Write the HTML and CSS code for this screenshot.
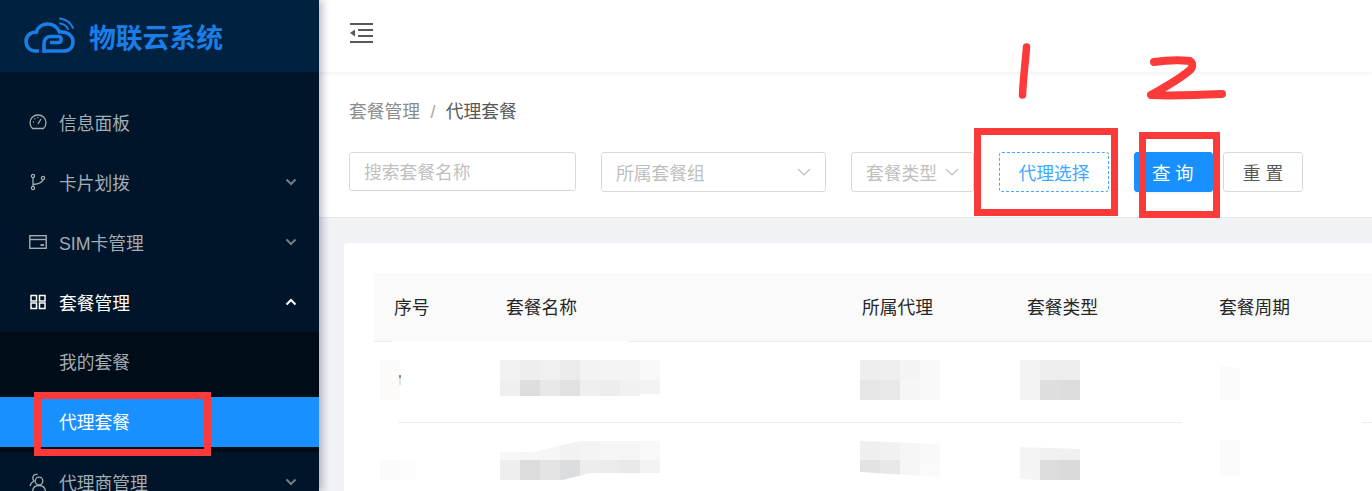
FILE: index.html
```html
<!DOCTYPE html>
<html lang="zh-CN">

<head>
    <meta charset="UTF-8">
    <meta name="viewport" content="width=device-width, initial-scale=1.0">
    <title>物联云系统 - 代理套餐</title>
    <link rel="stylesheet" href="styles.css">
</head>

<body>
    <div class="app">
        <aside class="sidebar">
            <div class="logo">
                <svg class="logo-mark" viewBox="20 14 60 42" fill="none" stroke="#1a7ee6" stroke-linecap="round">
                    <path stroke-width="3.600" stroke-linecap="butt" d="M39 51 H35.500 C29.500 51 26 46.500 26 41.500 C26 36 30.500 32 36.500 32 C38 26.500 43 24 47.500 24 C53 24 57.500 27.500 59.500 32 C67 31 73 35.500 73 42 C73 47.500 69 51 63.500 51 H43"/>
                    <path stroke-width="3.600" stroke-linecap="butt" d="M44 53 V44 C44 39 47 36.500 51 36.500 H58.500 C62 36.500 62 42.500 58.500 42.500 H50"/>
                    <path stroke-width="2" d="M60 18.500 C66 19.500 71 23 73 28"/>
                    <path stroke-width="2" d="M60 23.500 C63.500 24 66.500 26 68 29"/>
                </svg>
                <span class="logo-text">物联云系统</span>
            </div>
            <nav class="menu">
                <div class="menu-item">
                    <svg class="menu-icon" viewBox="0 0 18 18" fill="none" stroke="currentColor" stroke-width="1.300">
                        <path d="M3.500 15.500 H14.500 C16 14 17 12 17 9.500 C17 5.300 13.500 2 9 2 C4.500 2 1 5.300 1 9.500 C1 12 2 14 3.500 15.500 Z"/>
                        <path d="M9 11 L12 6 M4 9 H5 M5.500 5.500 L6.300 6.200 M9 4 V5"/>
                    </svg>
                    <span>信息面板</span>
                </div>
                <div class="menu-item">
                    <svg class="menu-icon" viewBox="0 0 18 18" fill="none" stroke="currentColor" stroke-width="1.300">
                        <circle cx="4" cy="3" r="1.600"/>
                        <circle cx="4" cy="15" r="1.600"/>
                        <circle cx="14" cy="5" r="1.600"/>
                        <path d="M4 4.600 V13.400 M4 11.500 C9 11 13.500 10 14 6.600"/>
                    </svg>
                    <span>卡片划拨</span>
                    <svg class="caret" viewBox="0 0 12 8" fill="none" stroke="currentColor" stroke-width="2"><path d="M1.500 1.500 L6 6 L10.500 1.500"/></svg>
                </div>
                <div class="menu-item">
                    <svg class="menu-icon" viewBox="0 0 18 18" fill="none" stroke="currentColor" stroke-width="1.400">
                        <rect x="0.800" y="2.700" width="16.400" height="12.600"/>
                        <path d="M1 6.500 H17"/>
                        <path d="M11.500 12 H15" stroke-width="1.800"/>
                    </svg>
                    <span>SIM卡管理</span>
                    <svg class="caret" viewBox="0 0 12 8" fill="none" stroke="currentColor" stroke-width="2"><path d="M1.500 1.500 L6 6 L10.500 1.500"/></svg>
                </div>
                <div class="menu-item is-open">
                    <svg class="menu-icon" viewBox="0 0 18 18" fill="none" stroke="currentColor" stroke-width="1.500">
                        <rect x="2" y="2.500" width="5.500" height="5.500"/>
                        <rect x="10.500" y="2.500" width="5.500" height="5.500"/>
                        <rect x="2" y="10" width="5.500" height="5.500"/>
                        <rect x="10.500" y="10" width="5.500" height="5.500"/>
                    </svg>
                    <span>套餐管理</span>
                    <svg class="caret" viewBox="0 0 12 8" fill="none" stroke="currentColor" stroke-width="2"><path d="M1.500 6.500 L6 2 L10.500 6.500"/></svg>
                </div>
                <div class="submenu">
                    <div class="submenu-item">我的套餐</div>
                    <div class="submenu-item is-active">代理套餐</div>
                </div>
                <div class="menu-item">
                    <svg class="menu-icon" viewBox="0 0 18 18" fill="none" stroke="currentColor" stroke-width="1.300">
                        <circle cx="10" cy="8" r="3.800"/>
                        <path d="M3.500 18 C4 14.500 6.500 12.500 10 12.500 C13.500 12.500 16 14.500 16.500 18"/>
                        <path d="M8.500 1.500 C6 0.800 3.800 2.500 3.800 5 C3.800 6.300 4.300 7.300 5 8 C3 9 1.500 10.800 1 13"/>
                    </svg>
                    <span>代理商管理</span>
                    <svg class="caret" viewBox="0 0 12 8" fill="none" stroke="currentColor" stroke-width="2"><path d="M1.500 1.500 L6 6 L10.500 1.500"/></svg>
                </div>
            </nav>
        </aside>

        <main class="main">
            <header class="topbar">
                <svg class="fold-icon" viewBox="0 0 23 20" fill="#595959">
                    <rect x="0" y="0" width="23" height="2"/>
                    <rect x="8" y="6" width="15" height="2"/>
                    <rect x="8" y="12" width="15" height="2"/>
                    <rect x="0" y="18" width="23" height="2"/>
                    <path d="M0 10 L5 6.500 V13.500 Z"/>
                </svg>
            </header>

            <section class="toolbar">
                <div class="breadcrumb">
                    <span class="crumb">套餐管理</span>
                    <span class="crumb-sep">/</span>
                    <span class="crumb-current">代理套餐</span>
                </div>
                <div class="filters">
                    <input class="field field-search" type="text" placeholder="搜索套餐名称">
                    <div class="field field-group">
                        <span>所属套餐组</span>
                        <svg class="select-arrow" viewBox="0 0 14 8" fill="none" stroke="currentColor" stroke-width="1.200"><path d="M1 1 L7 7 L13 1"/></svg>
                    </div>
                    <div class="field field-type">
                        <span>套餐类型</span>
                        <svg class="select-arrow" viewBox="0 0 14 8" fill="none" stroke="currentColor" stroke-width="1.200"><path d="M1 1 L7 7 L13 1"/></svg>
                    </div>
                    <button class="btn btn-dashed">代理选择</button>
                    <button class="btn btn-primary">查询</button>
                    <button class="btn btn-default">重置</button>
                </div>
            </section>

            <section class="content">
                <div class="card">
                    <div class="table">
                        <div class="table-head">
                            <div>序号</div>
                            <div>套餐名称</div>
                            <div>所属代理</div>
                            <div>套餐类型</div>
                            <div>套餐周期</div>
                        </div>

                        <!-- values are blurred out in the screenshot -->
                        <div class="table-row">
                            <div class="cell-no">
                                <svg class="blur blur-no" viewBox="0 0 24 40">
                                    <rect width="20" height="40" fill="#fcfbfa"/>
                                    <rect x="19" y="15" width="2" height="3" fill="#8f8f8f"/>
                                    <rect x="19" y="18" width="2" height="7" fill="#cfe6fb"/>
                                </svg>
                            </div>
                            <div class="cell-name">
                                <svg class="blur blur-name" viewBox="0 0 160 40">
                                    <rect x="0" width="20" height="20" fill="#f2f2f2"/>
                                    <rect x="20" width="20" height="20" fill="#eeeeee"/>
                                    <rect x="40" width="20" height="20" fill="#f0f0f0"/>
                                    <rect x="60" width="20" height="20" fill="#ebebeb"/>
                                    <rect x="80" width="20" height="20" fill="#f3f3f3"/>
                                    <rect x="100" width="20" height="20" fill="#f3f4f4"/>
                                    <rect x="120" width="20" height="20" fill="#f3f4f4"/>
                                    <rect x="140" width="20" height="20" fill="#f8f9f9"/>
                                    <rect x="0" y="20" width="20" height="16" fill="#efefef"/>
                                    <rect x="20" y="20" width="20" height="16" fill="#dedede"/>
                                    <rect x="40" y="20" width="20" height="16" fill="#e8e8e8"/>
                                    <rect x="60" y="20" width="20" height="16" fill="#e0e1e2"/>
                                    <rect x="80" y="20" width="20" height="16" fill="#efefef"/>
                                    <rect x="100" y="20" width="20" height="16" fill="#ededed"/>
                                    <rect x="120" y="20" width="20" height="16" fill="#f1f1f1"/>
                                    <rect x="140" y="20" width="20" height="14" fill="#f3f3f3"/>
                                </svg>
                            </div>
                            <div class="cell-agent">
                                <svg class="blur blur-agent" viewBox="0 0 80 40">
                                    <rect x="0" width="20" height="20" fill="#eeeeee"/>
                                    <rect x="20" width="20" height="20" fill="#efefef"/>
                                    <rect x="40" width="20" height="20" fill="#f4f4f4"/>
                                    <rect x="60" width="20" height="20" fill="#f9f9f9"/>
                                    <rect x="0" y="20" width="20" height="20" fill="#e6e6e6"/>
                                    <rect x="20" y="20" width="20" height="20" fill="#e9e9e9"/>
                                    <rect x="40" y="20" width="20" height="20" fill="#f6f6f6"/>
                                    <rect x="60" y="20" width="20" height="20" fill="#f9f9f9"/>
                                </svg>
                            </div>
                            <div class="cell-type">
                                <svg class="blur blur-type" viewBox="0 0 60 40">
                                    <rect x="0" width="20" height="40" fill="#f3f3f3"/>
                                    <rect x="20" width="20" height="20" fill="#eeeeee"/>
                                    <rect x="40" width="20" height="20" fill="#eeeeee"/>
                                    <rect x="20" y="20" width="20" height="20" fill="#dedede"/>
                                    <rect x="40" y="20" width="20" height="20" fill="#dddddd"/>
                                </svg>
                            </div>
                            <div class="cell-cycle">
                                <svg class="blur blur-cycle" viewBox="0 0 20 40">
                                    <path d="M0 6 L20 8 V40 H0 Z" fill="#fbfbfb"/>
                                </svg>
                            </div>
                        </div>

                        <div class="table-row">
                            <div class="cell-no">
                                <svg class="blur blur-no" viewBox="0 0 24 40">
                                    <rect y="20" width="20" height="20" fill="#fbfbfb"/>
                                </svg>
                                <svg class="blur blur-no-end" viewBox="0 0 16 40">
                                    <rect y="20" width="16" height="20" fill="#fcfdfc"/>
                                </svg>
                            </div>
                            <div class="cell-name">
                                <svg class="blur blur-name" viewBox="0 0 160 40">
                                    <g clip-path="polygon(0 12px, 33px 12px, 80px 1px, 160px 1px, 160px 33px, 90px 33px, 63px 40px, 0 40px)">
                                        <rect x="0" width="20" height="20" fill="#f7f7f7"/>
                                        <rect x="20" width="20" height="20" fill="#f6f6f6"/>
                                        <rect x="40" width="20" height="20" fill="#f6f6f6"/>
                                        <rect x="60" width="20" height="20" fill="#f2f2f2"/>
                                        <rect x="80" width="20" height="20" fill="#f4f4f4"/>
                                        <rect x="100" width="20" height="20" fill="#f4f5f5"/>
                                        <rect x="120" width="20" height="20" fill="#f4f5f5"/>
                                        <rect x="140" width="20" height="20" fill="#f9f9f9"/>
                                        <rect x="0" y="20" width="20" height="20" fill="#eeeeee"/>
                                        <rect x="20" y="20" width="20" height="20" fill="#dcdcdc"/>
                                        <rect x="40" y="20" width="20" height="20" fill="#e4e4e4"/>
                                        <rect x="60" y="20" width="20" height="20" fill="#dcddde"/>
                                        <rect x="80" y="20" width="20" height="20" fill="#ededed"/>
                                        <rect x="100" y="20" width="20" height="20" fill="#ebebeb"/>
                                        <rect x="120" y="20" width="20" height="20" fill="#e9e9e9"/>
                                        <rect x="140" y="20" width="20" height="20" fill="#f3f3f3"/>
                                    </g>
                                </svg>
                            </div>
                            <div class="cell-agent">
                                <svg class="blur blur-agent" viewBox="0 0 80 40">
                                    <g clip-path="polygon(0 1px, 80px 4px, 80px 37px, 0 32px)">
                                        <rect x="0" width="20" height="20" fill="#efefef"/>
                                        <rect x="20" width="20" height="20" fill="#f1f1f1"/>
                                        <rect x="40" width="20" height="20" fill="#f5f5f5"/>
                                        <rect x="60" width="20" height="20" fill="#f9f9f9"/>
                                        <rect x="0" y="20" width="20" height="20" fill="#e3e3e3"/>
                                        <rect x="20" y="20" width="20" height="20" fill="#e8e8e8"/>
                                        <rect x="40" y="20" width="20" height="20" fill="#f6f6f6"/>
                                        <rect x="60" y="20" width="20" height="20" fill="#fafafa"/>
                                    </g>
                                </svg>
                            </div>
                            <div class="cell-type">
                                <svg class="blur blur-type" viewBox="0 0 60 40">
                                    <g clip-path="polygon(0 7px, 60px 9px, 60px 40px, 20px 40px, 0 39px)">
                                        <rect x="0" width="20" height="40" fill="#f4f4f4"/>
                                        <rect x="20" width="40" height="20" fill="#f0f0f0"/>
                                        <rect x="20" y="20" width="20" height="20" fill="#dcdcdc"/>
                                        <rect x="40" y="20" width="20" height="20" fill="#dadada"/>
                                    </g>
                                </svg>
                            </div>
                            <div class="cell-cycle">
                                <svg class="blur blur-cycle" viewBox="0 0 20 40">
                                    <path d="M0 0 H20 V37 L0 34 Z" fill="#fbfbfb"/>
                                </svg>
                            </div>
                        </div>

                        <!-- white smudges over the rules, from the blur brush -->
                        <span class="smudge smudge-top"></span>
                        <span class="smudge smudge-left"></span>
                        <span class="smudge smudge-right"></span>
                    </div>
                </div>
            </section>
        </main>
    </div>

    <!-- red marks drawn on top of the screenshot -->
    <span class="mark mark-menu"></span>
    <span class="mark mark-agent"></span>
    <span class="mark mark-query"></span>
    <svg class="scribble" viewBox="0 0 1372 120" fill="none" stroke="#fd3a3a" stroke-linecap="round" stroke-linejoin="round">
        <path stroke-width="7.500" d="M1026.500 47 C1025.500 62 1023 80 1022.500 95"/>
        <path stroke-width="8" d="M1154 62 C1165 60.500 1180 60 1190 61 C1193 63 1193 67 1190 70 C1180 79 1165 87 1151 95 C1170 96 1200 95 1222 94"/>
    </svg>
</body>

</html>
```

FILE: styles.css
```css
html, body {
    margin: 0;
    padding: 0;
    height: 100%;
    overflow: hidden;
}

body {
    font-family: 'Liberation Sans', 'Noto Sans CJK SC', sans-serif;
    font-size: 17.750px;
    color: #595959;
    background-color: #f0f2f5;
}

.app {
    display: flex;
    height: 491px;
}

/* Sidebar */
.sidebar {
    position: relative;
    z-index: 2;
    flex: 0 0 319px;
    background-color: #001529;
    color: #a3abb3;
    box-shadow: 3px 0 8px rgba(0, 21, 41, 0.3);
    overflow: hidden;
}

.logo {
    display: flex;
    align-items: center;
    height: 72px;
    background-color: #002140;
    padding-left: 20px;
}

.logo-mark {
    width: 60px;
    height: 42px;
    margin-right: 9px;
    margin-top: -3px;
}

.logo-text {
    color: #1a7ee6;
    font-size: 26.800px;
    font-weight: 700;
    margin-top: 1px;
}

.menu {
    padding-top: 20px;
}

.menu-item {
    display: flex;
    align-items: center;
    height: 60px;
    padding-left: 29px;
    padding-right: 22px;
}

.menu-item span {
    flex: 1;
}

.menu-item.is-open {
    color: #fff;
}

.menu-icon {
    width: 18px;
    height: 18px;
    margin-right: 12px;
}

.caret {
    width: 12px;
    height: 8px;
    opacity: 0.7;
}

.is-open .caret {
    opacity: 1;
}

.submenu {
    background-color: #000c17;
    padding: 5px 0;
}

.submenu-item {
    height: 50px;
    line-height: 52px;
    padding-left: 59px;
}

.submenu-item.is-active {
    margin-top: 10px;
    background-color: #1890ff;
    color: #fff;
}

/* Main column */
.main {
    flex: 1;
    min-width: 0;
    display: flex;
    flex-direction: column;
}

.topbar {
    position: relative;
    z-index: 1;
    height: 72px;
    display: flex;
    align-items: center;
    padding-left: 31px;
    background-color: #fff;
    box-shadow: 0 1px 4px rgba(0, 21, 41, 0.08);
}

.fold-icon {
    width: 23px;
    height: 20px;
    margin-top: -6px;
}

.toolbar {
    height: 146px;
    box-sizing: border-box;
    padding: 28px 30px 0;
    background-color: #fff;
    border-bottom: 1px solid #e8e8e8;
}

.breadcrumb {
    height: 24px;
    line-height: 24px;
}

.crumb {
    color: #8c8c8c;
}

.crumb-sep {
    color: #a6a6a6;
    margin: 0 5.500px;
}

.crumb-current {
    color: #595959;
}

.filters {
    display: flex;
    align-items: flex-start;
    gap: 25px;
    margin-top: 28px;
}

.field {
    display: flex;
    align-items: center;
    justify-content: space-between;
    box-sizing: border-box;
    height: 40px;
    padding: 0 14px;
    border: 1px solid #d9d9d9;
    border-radius: 3px;
    background-color: #fff;
    color: #bfbfbf;
    font-family: inherit;
    font-size: inherit;
}

.field::placeholder {
    color: #bfbfbf;
    opacity: 1;
}

.field-search {
    width: 227px;
    height: 39px;
    padding-top: 3px;
    outline: none;
}

.field-group {
    width: 225px;
}

.field-type {
    width: 123px;
    padding-right: 14px;
}

.select-arrow {
    flex: none;
    width: 14px;
    height: 8px;
}

.btn {
    box-sizing: border-box;
    height: 40px;
    border-radius: 3px;
    padding: 0;
    font-family: inherit;
    font-size: inherit;
    cursor: pointer;
}

.btn-dashed {
    width: 110px;
    border: 1px dashed #40a9ff;
    background-color: #fff;
    color: #40a9ff;
}

.btn-primary {
    width: 79px;
    border: 1px solid #1890ff;
    background-color: #1890ff;
    color: #fff;
    font-size: 18.500px;
    letter-spacing: 4.500px;
    text-indent: 3px;
    box-shadow: 0 2px 0 rgba(0, 0, 0, 0.04);
}

.btn-default {
    width: 80px;
    margin-left: -15px;
    border: 1px solid #d9d9d9;
    background-color: #fff;
    color: #595959;
    letter-spacing: 5px;
    text-indent: 5px;
}

/* Table card */
.content {
    flex: 1;
    padding: 25px 0 0 25px;
    min-height: 0;
}

.card {
    height: 100%;
    box-sizing: border-box;
    padding: 30px 0 0 30px;
    background-color: #fff;
    border-radius: 3px 0 0 0;
}

.table {
    position: relative;
}

.table-head,
.table-row {
    display: grid;
    grid-template-columns: 112px 356px 165px 192px 1fr;
}

.table-head {
    height: 68px;
    line-height: 70px;
    background-color: #fafafa;
    border-bottom: 1px solid #eeeeee;
    color: #262626;
}

.table-head > div {
    padding-left: 20px;
}

.table-row {
    height: 80px;
    box-sizing: content-box;
    border-bottom: 1px solid #eeeeee;
}

.table-row > div {
    display: flex;
    padding-top: 18px;
}

.table-row:last-of-type {
    border-bottom: none;
}

.table-row:last-of-type > div {
    padding-top: 17px;
}

.blur {
    display: block;
    height: 40px;
}

.blur-no {
    width: 24px;
    margin-left: 6px;
}

.blur-no-end {
    width: 16px;
    margin-left: -4px;
}

.blur-name {
    width: 160px;
    margin-left: 14px;
}

.blur-agent {
    width: 80px;
    margin-left: 18px;
}

.blur-type {
    width: 60px;
    margin-left: 13px;
}

.blur-cycle {
    width: 20px;
    margin-left: 21px;
}

.smudge {
    position: absolute;
    height: 3px;
    background-color: #fff;
}

.smudge-top {
    top: 68px;
    left: 19px;
    width: 235px;
}

.smudge-left {
    top: 148px;
    left: 0;
    width: 24px;
}

.smudge-right {
    top: 148px;
    left: 808px;
    width: 180px;
}

/* Annotations */
.mark {
    position: absolute;
    z-index: 3;
    box-sizing: border-box;
    border: 7px solid #fd3a3a;
}

.mark-menu {
    left: 34px;
    top: 392px;
    width: 177px;
    height: 64px;
}

.mark-agent {
    left: 974px;
    top: 128px;
    width: 144px;
    height: 88px;
}

.mark-query {
    left: 1139px;
    top: 132px;
    width: 81px;
    height: 86px;
}

.scribble {
    position: absolute;
    z-index: 3;
    left: 0;
    top: 0;
    width: 1372px;
    height: 120px;
}
```
